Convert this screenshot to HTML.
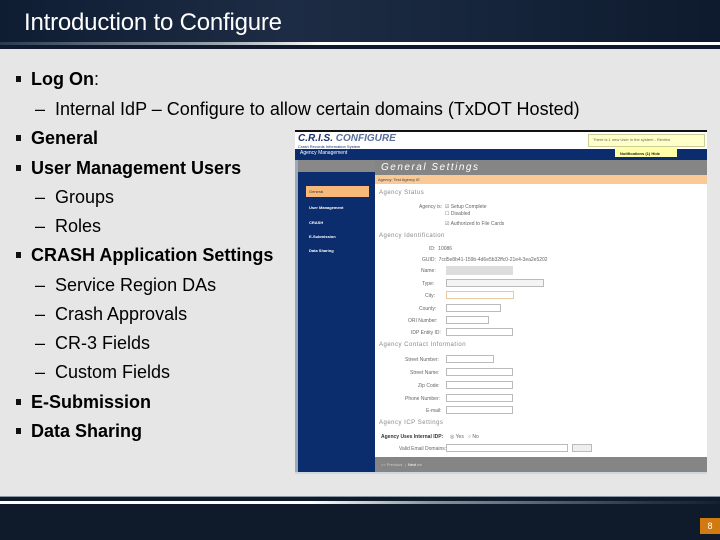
<!DOCTYPE html>
<html><head><meta charset="utf-8"><style>
*{margin:0;padding:0;box-sizing:border-box}
body{width:720px;height:540px;overflow:hidden;background:#e6e6e6;font-family:"Liberation Sans",Arial,sans-serif;position:relative}
.hdr{position:absolute;left:0;top:0;width:720px;height:43px;background:linear-gradient(90deg,#0f1d33,#1d2c44 40%,#15243a 70%,#0e1a2d)}
.hl{position:absolute;left:0;top:42px;width:720px;height:3px;background:linear-gradient(90deg,#2a3a50,#9aa3ae 30%,#fff 45%,#fff)}
.hl2{position:absolute;left:0;top:45px;width:720px;height:4px;background:#0f1b2c}
.title{position:absolute;left:24px;top:9px;color:#fff;font-size:24px;letter-spacing:-0.2px}
.t{position:absolute;font-size:18px;color:#000;white-space:nowrap}
.b{font-weight:bold;left:31px}
.b:before{content:"";position:absolute;left:-15px;top:7px;width:5px;height:6px;background:#111}
.s{left:35px}
.ftr{position:absolute;left:0;top:496px;width:720px;height:44px;background:#0f1a2b}
.fl{position:absolute;left:0;top:501px;width:720px;height:3px;background:linear-gradient(90deg,#fff,#fff 43%,#8a929c 60%,#2a3444 90%,#16202f)}
.pg{position:absolute;left:700px;top:518px;width:20px;height:16px;background:#d07a10;color:#fff;font-size:9px;text-align:center;line-height:16px}
.sc{position:absolute;left:295px;top:130px;width:412px;height:344px;background:#fff;overflow:hidden;font-size:6px;color:#555}
.a{position:absolute}
.in{position:absolute;border:1px solid #bbb;background:#fff;height:8px}
</style></head><body>
<div class="hdr"></div><div class="hl"></div><div class="hl2"></div>
<div class="title">Introduction to Configure</div>

<div class="t b" style="top:69px">Log On<span style="font-weight:normal">:</span></div>
<div class="t s" style="top:99px">– &nbsp;Internal IdP – Configure to allow certain domains (TxDOT Hosted)</div>
<div class="t b" style="top:128px">General</div>
<div class="t b" style="top:158px">User Management Users</div>
<div class="t s" style="top:187px">– &nbsp;Groups</div>
<div class="t s" style="top:216px">– &nbsp;Roles</div>
<div class="t b" style="top:245px">CRASH Application Settings</div>
<div class="t s" style="top:275px">– &nbsp;Service Region DAs</div>
<div class="t s" style="top:304px">– &nbsp;Crash Approvals</div>
<div class="t s" style="top:333px">– &nbsp;CR-3 Fields</div>
<div class="t s" style="top:362px">– &nbsp;Custom Fields</div>
<div class="t b" style="top:392px">E-Submission</div>
<div class="t b" style="top:421px">Data Sharing</div>

<div class="sc">
 <div class="a" style="left:0;top:0;width:412px;height:2px;background:#111"></div>
 <div class="a" style="left:3px;top:3px;font:bold italic 10px 'Liberation Sans';color:#1a2f6e">C.R.I.S. <span style="color:#5a6f9a">CONFIGURE</span></div>
 <div class="a" style="left:3px;top:14px;font-size:4px;color:#1a2f6e">Crash Records Information System</div>
 <div class="a" style="left:293px;top:4px;width:117px;height:13px;background:#ffffc8;border:1px solid #cc9"></div>
 <div class="a" style="left:298px;top:7px;font-size:4px;color:#666">There is 1 new User in the system - Review</div>
 <div class="a" style="left:0;top:19px;width:412px;height:8px;background:#0b2d6e"></div>
 <div class="a" style="left:320px;top:17px;width:62px;height:13px;background:#ffffa8"></div>
 <div class="a" style="left:325px;top:21px;font-size:4px;color:#222;font-weight:bold">Notifications (1) Hide</div>
 <div class="a" style="left:5px;top:20px;font-size:5px;color:#fff">Agency Management</div>
 <div class="a" style="left:0;top:27px;width:412px;height:3px;background:#0b2d6e"></div>
 <div class="a" style="left:0;top:30px;width:3px;height:314px;background:#9ab"></div>
 <div class="a" style="left:3px;top:30px;width:77px;height:314px;background:#0b2d6e"></div>
 <div class="a" style="left:3px;top:30px;width:77px;height:12px;background:#888"></div>
 <div class="a" style="left:80px;top:30px;width:332px;height:15px;background:#858585"></div>
 <div class="a" style="left:86px;top:32px;font:italic 10px 'Liberation Sans';color:#fff;letter-spacing:1.5px">General Settings</div>
 <div class="a" style="left:80px;top:45px;width:332px;height:9px;background:#f9c996"></div>
 <div class="a" style="left:83px;top:47px;font-size:4px;color:#444">Agency: Test Agency IE</div>
 <div class="a" style="left:11px;top:56px;width:63px;height:11px;background:#f6b97a"></div>
 <div class="a" style="left:14px;top:59px;font-size:4px;color:#333">General</div>
 <div class="a" style="left:14px;top:75px;font-size:4px;color:#fff;font-weight:bold">User Management</div>
 <div class="a" style="left:14px;top:90px;font-size:4px;color:#fff;font-weight:bold">CRASH</div>
 <div class="a" style="left:14px;top:104px;font-size:4px;color:#fff;font-weight:bold">E-Submission</div>
 <div class="a" style="left:14px;top:118px;font-size:4px;color:#fff;font-weight:bold">Data Sharing</div>
 <div class="a" style="left:84px;top:60px;font-size:6px;color:#888;letter-spacing:.5px">Agency Status</div>
 <div class="a" style="left:124px;top:74px;font-size:5px;color:#666">Agency is: &nbsp;☑ Setup Complete</div>
 <div class="a" style="left:150px;top:81px;font-size:5px;color:#666">☐ Disabled</div>
 <div class="a" style="left:150px;top:91px;font-size:5px;color:#666">☑ Authorized to File Cards</div>
 <div class="a" style="left:84px;top:103px;font-size:6px;color:#888;letter-spacing:.5px">Agency Identification</div>
 <div class="a" style="left:134px;top:116px;font-size:5px;color:#666">ID: &nbsp;10086</div>
 <div class="a" style="left:127px;top:127px;font-size:5px;color:#666">GUID: &nbsp;7cd5e8b41-159b-4d6e5b32ffc0-21e4-3ea2e5202</div>
 <div class="a" style="left:151px;top:136px;width:67px;height:9px;background:#ddd"></div>
 <div class="a" style="left:126px;top:138px;font-size:5px;color:#666">Name:</div>
 <div class="in" style="left:151px;top:149px;width:98px;background:#f4f4f4"></div>
 <div class="a" style="left:127px;top:151px;font-size:5px;color:#666">Type:</div>
 <div class="in" style="left:151px;top:161px;width:68px;border-color:#e8c8a0"></div>
 <div class="a" style="left:130px;top:163px;font-size:5px;color:#666">City:</div>
 <div class="in" style="left:151px;top:174px;width:55px"></div>
 <div class="a" style="left:124px;top:176px;font-size:5px;color:#666">County:</div>
 <div class="in" style="left:151px;top:186px;width:43px"></div>
 <div class="a" style="left:113px;top:188px;font-size:5px;color:#666">ORI Number:</div>
 <div class="in" style="left:151px;top:198px;width:67px"></div>
 <div class="a" style="left:116px;top:200px;font-size:5px;color:#666">IDP Entity ID:</div>
 <div class="a" style="left:84px;top:212px;font-size:6px;color:#888;letter-spacing:.5px">Agency Contact Information</div>
 <div class="in" style="left:151px;top:225px;width:48px"></div>
 <div class="in" style="left:151px;top:238px;width:67px"></div>
 <div class="in" style="left:151px;top:251px;width:67px"></div>
 <div class="in" style="left:151px;top:264px;width:67px"></div>
 <div class="in" style="left:151px;top:276px;width:67px"></div>
 <div class="a" style="left:110px;top:227px;font-size:5px;color:#666">Street Number:</div>
 <div class="a" style="left:115px;top:240px;font-size:5px;color:#666">Street Name:</div>
 <div class="a" style="left:123px;top:253px;font-size:5px;color:#666">Zip Code:</div>
 <div class="a" style="left:110px;top:266px;font-size:5px;color:#666">Phone Number:</div>
 <div class="a" style="left:131px;top:278px;font-size:5px;color:#666">E-mail:</div>
 <div class="a" style="left:84px;top:290px;font-size:6px;color:#888;letter-spacing:.5px">Agency ICP Settings</div>
 <div class="a" style="left:86px;top:304px;font-size:5px;color:#333;font-weight:bold">Agency Uses Internal IDP:</div>
 <div class="a" style="left:155px;top:304px;font-size:5px;color:#666">◎ Yes &nbsp; ○ No</div>
 <div class="a" style="left:104px;top:316px;font-size:5px;color:#666">Valid Email Domains:</div>
 <div class="in" style="left:151px;top:314px;width:122px"></div>
 <div class="in" style="left:277px;top:314px;width:20px;background:#eee"></div>
 <div class="a" style="left:80px;top:327px;width:332px;height:15px;background:#858585"></div>
 <div class="a" style="left:86px;top:332px;font-size:4px;color:#ccc">&lt;&lt; Previous &nbsp;| &nbsp;<span style="color:#fff">Next &gt;&gt;</span></div>
 <div class="a" style="left:0;top:342px;width:412px;height:2px;background:#cfd6e0"></div>
</div>

<div class="ftr"></div><div class="a" style="position:absolute;left:0;top:496px;width:720px;height:1px;background:#8a93a0"></div><div class="fl"></div>
<div class="pg">8</div>
</body></html>
